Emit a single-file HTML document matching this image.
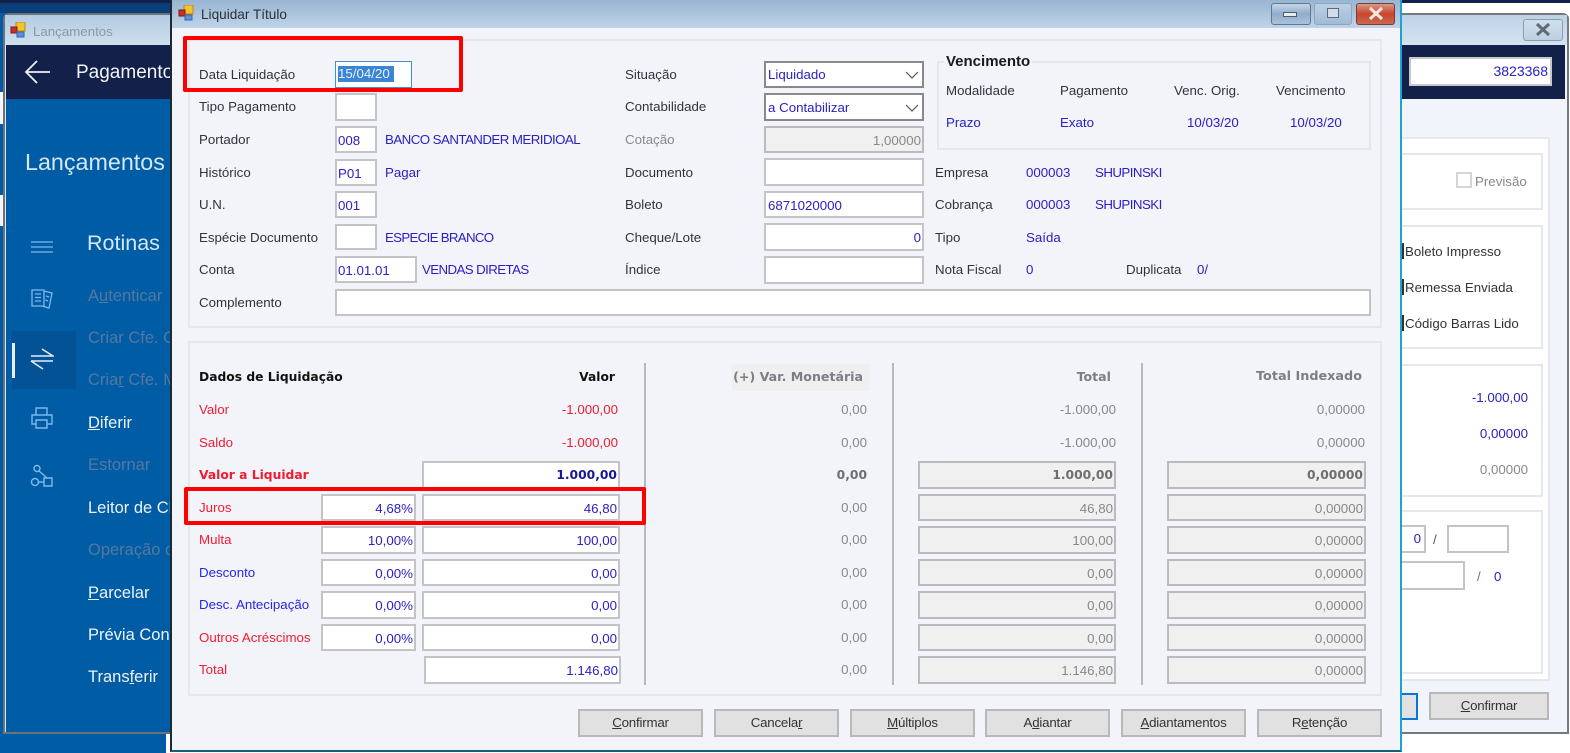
<!DOCTYPE html>
<html lang="pt"><head><meta charset="utf-8"><title>Liquidar Título</title>
<style>
html,body{margin:0;padding:0}
body{width:1570px;height:753px;position:relative;overflow:hidden;background:#fff;font:13.3px/16px "Liberation Sans",sans-serif;color:#30343a}
div,svg{position:absolute;box-sizing:border-box}
#w{left:0;top:0;width:1570px;height:753px;overflow:hidden;filter:blur(.3px)}
.t{white-space:nowrap;height:16px;margin-top:1px}
.r{text-align:right}
.b{color:#2b20c4}.red{color:#f01c30}.lb{color:#2626ea}.g{color:#85888e}
.u{letter-spacing:-.55px}
.n{font-size:16.5px;line-height:20px;height:20px;color:#edf3f9;left:88px;white-space:nowrap;margin-top:1px}
.d{color:#54789f}
.i{background:#fff;border:2px solid #c2c4c8}
.s{border-color:#88898c}
.x{background:#f0f0f0;border:2px solid #b9bbbf}
.gb{border:2px solid #e5e7ec}
.h{font:bold 12.3px/16px "DejaVu Sans",sans-serif;white-space:nowrap;height:16px}
.btn{top:709px;height:28px;background:#e1e1e1;border:2px solid #b8b8b8;text-align:center;line-height:24px;color:#333;letter-spacing:-.2px}
.sep{width:2px;background:#b6b8bc;top:363px;height:322px}
</style></head><body><div id="w">
<!-- background -->
<div style="left:0;top:0;width:1570px;height:3px;background:#12204a"></div>
<div style="left:0;top:0;width:171px;height:753px;background:#005ca4"></div>
<div style="left:0;top:0;width:171px;height:3px;background:#12204a"></div>
<div style="left:0;top:3px;width:171px;height:10px;background:#0a3f7c"></div>
<div style="left:0;top:92px;width:3px;height:32px;background:#f4f6f8"></div>
<div style="left:0;top:195px;width:3px;height:31px;background:#f4f6f8"></div>
<div style="left:166px;top:733px;width:5px;height:20px;background:#fff"></div>
<!-- left back window -->
<div style="left:3px;top:13px;width:175px;height:721px;border:2px solid #6d7278;border-right:0;border-radius:6px 0 0 0;background:#dce7f3"></div>
<div style="left:5px;top:15px;width:170px;height:30px;background:linear-gradient(#b4cbe2,#cfdfee)"></div>
<div style="left:6px;top:45px;width:165px;height:687px;background:#005ca4"></div>
<div style="left:6px;top:45px;width:165px;height:54px;background:#12204a"></div>
<svg style="left:10px;top:22px" width="17" height="17" viewBox="0 0 17 17"><rect x="6" y="0" width="9" height="9" fill="#f2c230" stroke="#b88a10"/><rect x="1" y="5" width="6" height="6" fill="#c8302a" stroke="#7a1a18"/><rect x="7" y="10" width="7" height="5" fill="#5c90dc" stroke="#3a66aa"/></svg>
<div class="t" style="left:33px;top:23px;color:#8c97a3">Lançamentos</div>
<svg style="left:24px;top:59px" width="28" height="26" viewBox="0 0 28 26" fill="none" stroke="#eef2f6" stroke-width="1.8"><path d="M2 13H26M13 2 2 13 13 24"/></svg>
<div class="t" style="left:76px;top:60px;font-size:19px;line-height:24px;height:24px;color:#f2f5f8;width:94px;overflow:hidden">Pagamentos</div>
<div class="t" style="left:25px;top:146px;font-size:23.3px;line-height:30px;height:30px;color:#d6e6f3;width:145px;overflow:hidden">Lançamentos</div>
<div class="t" style="left:87px;top:229px;font-size:21.5px;line-height:26px;height:26px;color:#d6e6f3">Rotinas</div>
<svg style="left:30px;top:240px" width="24" height="14" viewBox="0 0 24 14" stroke="#7db8ea" stroke-width="1.3"><path d="M1 2H23M1 7H23M1 12H23"/></svg>
<svg style="left:30px;top:288px" width="24" height="24" viewBox="0 0 24 24" fill="none" stroke="#7db8ea" stroke-width="1.3"><path d="M2 2H14V18H2ZM14 3 22 5 19 20 12 18M5 6H11M5 9.500H11M5 13H11M16 8 19 9M15.500 12 18 13"/></svg>
<div style="left:12px;top:331px;width:64px;height:58px;background:#035296"></div>
<div style="left:12px;top:343px;width:3px;height:35px;background:#e8eef4"></div>
<svg style="left:30px;top:346px" width="24" height="26" viewBox="0 0 24 26" fill="none" stroke="#e6ecf2" stroke-width="1.5"><path d="M1 10H23L12 3M1 15H23M1 15 13 23"/></svg>
<svg style="left:30px;top:406px" width="24" height="24" viewBox="0 0 24 24" fill="none" stroke="#7db8ea" stroke-width="1.4"><path d="M6 9V2H17V9M6 18H2V9H22V18H17M6 14H17V22H6Z"/></svg>
<svg style="left:30px;top:464px" width="24" height="26" viewBox="0 0 24 26" fill="none" stroke="#7db8ea" stroke-width="1.4"><circle cx="7" cy="4.500" r="3"/><circle cx="5" cy="18" r="3.500"/><path d="M9 7 17 14M8.500 18H14M14 14H22V22H14Z"/></svg>
<div class="n d" style="top:285px">A<u>u</u>tenticar</div>
<div class="n d" style="top:327px;width:83px;overflow:hidden">Criar Cfe. Cheque</div>
<div class="n d" style="top:369px;width:83px;overflow:hidden">Cria<u>r</u> Cfe. Mov</div>
<div class="n" style="top:412px"><u>D</u>iferir</div>
<div class="n d" style="top:454px">Estornar</div>
<div class="n" style="top:497px;width:83px;overflow:hidden">Leitor de Cheque</div>
<div class="n d" style="top:539px;width:83px;overflow:hidden">Operação de</div>
<div class="n" style="top:582px"><u>P</u>arcelar</div>
<div class="n" style="top:624px;width:83px;overflow:hidden">Prévia Contábil</div>
<div class="n" style="top:666px">Trans<u>f</u>erir</div>
<!-- right back window -->
<div style="left:1395px;top:3px;width:175px;height:10px;background:#fff"></div>
<div style="left:1395px;top:13px;width:174px;height:721px;background:#f1f4fa;border:2px solid #75797e;border-left:0;border-radius:0 6px 0 0"></div>
<div style="left:1395px;top:15px;width:172px;height:30px;background:linear-gradient(#bdd2e6,#d6e3f0)"></div>
<div style="left:1523px;top:19px;width:40px;height:22px;background:linear-gradient(#cfdeec,#bdd0e2);border:1px solid #8c9cab;border-radius:3px"></div>
<svg style="left:1535px;top:23px" width="16" height="13" viewBox="0 0 16 13" stroke="#5e6a74" stroke-width="3"><path d="M2 1 14 12M14 1 2 12"/></svg>
<div style="left:1395px;top:45px;width:170px;height:54px;background:#12204a"></div>
<div class="i r b" style="left:1409px;top:57px;width:143px;height:29px;font-size:14px;line-height:25px;padding-right:2px;border-color:#c8c8c8">3823368</div>
<div style="left:1395px;top:137px;width:155px;height:544px;background:#fff;border:2px solid #e5e7ec;border-left:0"></div>
<div class="gb" style="left:1395px;top:153px;width:148px;height:57px;border-left:0"></div>
<div class="x" style="left:1456px;top:172px;width:16px;height:16px;background:#fff;border-color:#d4d5d7"></div>
<div class="t g" style="left:1475px;top:173px">Previsão</div>
<div class="gb" style="left:1395px;top:225px;width:148px;height:124px;border-left:0"></div>
<div style="left:1401px;top:243px;width:3px;height:16px;background:#333"></div>
<div style="left:1401px;top:279px;width:3px;height:16px;background:#333"></div>
<div style="left:1401px;top:315px;width:3px;height:16px;background:#333"></div>
<div class="t" style="left:1405px;top:243px">Boleto Impresso</div>
<div class="t" style="left:1405px;top:279px">Remessa Enviada</div>
<div class="t" style="left:1405px;top:315px">Código Barras Lido</div>
<div class="gb" style="left:1395px;top:364px;width:148px;height:133px;border-left:0"></div>
<div class="t r b" style="left:1400px;top:389px;width:128px">-1.000,00</div>
<div class="t r b" style="left:1400px;top:425px;width:128px">0,00000</div>
<div class="t r g" style="left:1400px;top:461px;width:128px">0,00000</div>
<div class="gb" style="left:1395px;top:510px;width:148px;height:164px;border-left:0;background:#fff"></div>
<div class="i r b" style="left:1395px;top:525px;width:31px;height:28px;padding-right:3px;line-height:24px">0</div>
<div class="t" style="left:1433px;top:531px;color:#555">/</div>
<div class="i" style="left:1447px;top:525px;width:62px;height:28px"></div>
<div class="i" style="left:1395px;top:561px;width:70px;height:29px"></div>
<div class="t" style="left:1477px;top:568px;color:#607090">/</div>
<div class="t b" style="left:1494px;top:568px">0</div>
<div style="left:1395px;top:693px;width:23px;height:27px;border:2px solid #0078d7;border-left:0;background:#e1e1e1"></div>
<div class="btn" style="left:1429px;top:692px;width:120px"><u>C</u>onfirmar</div>
<!-- main dialog -->
<div style="left:170px;top:0;width:1232px;height:752px;background:#f2f4fa;border-left:2px solid #1c2a33;border-right:2px solid #1ba3d4;border-bottom:2px solid #16606f"></div>
<div style="left:172px;top:0;width:1228px;height:28px;background:linear-gradient(#98b5d2,#c0d4e8)"></div>
<svg style="left:178px;top:5px" width="17" height="17" viewBox="0 0 17 17"><rect x="6" y="0" width="9" height="9" fill="#f2c230" stroke="#b88a10"/><rect x="1" y="5" width="6" height="6" fill="#c8302a" stroke="#7a1a18"/><rect x="7" y="10" width="7" height="5" fill="#5c90dc" stroke="#3a66aa"/></svg>
<div class="t" style="left:201px;top:6px;color:#2a3038;font-size:13.6px">Liquidar Título</div>
<div style="left:1271px;top:3px;width:40px;height:22px;background:linear-gradient(#c4d6e8,#8fadcb 50%,#a8c2dc);border:1px solid #62778c;border-radius:3px"></div>
<div style="left:1283px;top:12px;width:14px;height:5px;background:#e6ecf2;border:1px solid #4e5c68"></div>
<div style="left:1314px;top:3px;width:38px;height:22px;background:linear-gradient(#bcd0e4,#a0bbd6);border:1px solid #8ea6bd;border-radius:3px"></div>
<div style="left:1327px;top:8px;width:12px;height:10px;border:1.5px solid #5a6a78;background:#d0dcea"></div>
<div style="left:1356px;top:3px;width:39px;height:22px;background:linear-gradient(#d89a86,#c8452c 50%,#c96a50);border:1px solid #7c3a30;border-radius:3px"></div>
<svg style="left:1368px;top:7px" width="16" height="13" viewBox="0 0 16 13" stroke="#f0e8e0" stroke-width="3"><path d="M2 1 14 12M14 1 2 12"/></svg>
<!-- group 1 -->
<div class="gb" style="left:188px;top:39px;width:1194px;height:289px"></div>
<div class="t" style="left:199px;top:66px">Data Liquidação</div>
<div style="left:335px;top:61px;width:77px;height:27px;background:#fff;border:1px solid #3a92d8"></div>
<div style="left:338px;top:66px;width:56px;height:16px;background:#3b86d4"></div>
<div class="t" style="left:338px;top:65px;color:#e8f0fa">15/04/20</div>
<div class="t" style="left:199px;top:98px">Tipo Pagamento</div>
<div class="i" style="left:335px;top:93px;width:42px;height:28px"></div>
<div class="t" style="left:199px;top:131px">Portador</div>
<div class="i b" style="left:335px;top:126px;width:42px;height:27px;padding-left:1px;line-height:25px">008</div>
<div class="t b u" style="left:385px;top:131px">BANCO SANTANDER MERIDIOAL</div>
<div class="t" style="left:199px;top:164px">Histórico</div>
<div class="i b" style="left:335px;top:159px;width:42px;height:27px;padding-left:1px;line-height:25px">P01</div>
<div class="t b" style="left:385px;top:164px">Pagar</div>
<div class="t" style="left:199px;top:196px">U.N.</div>
<div class="i b" style="left:335px;top:191px;width:42px;height:27px;padding-left:1px;line-height:25px">001</div>
<div class="t" style="left:199px;top:229px">Espécie Documento</div>
<div class="i" style="left:335px;top:224px;width:42px;height:26px"></div>
<div class="t b" style="left:385px;top:229px;letter-spacing:-.7px">ESPECIE BRANCO</div>
<div class="t" style="left:199px;top:261px">Conta</div>
<div class="i b" style="left:335px;top:256px;width:82px;height:27px;padding-left:1px;line-height:25px">01.01.01</div>
<div class="t b" style="left:422px;top:261px;letter-spacing:-.6px">VENDAS DIRETAS</div>
<div class="t" style="left:199px;top:294px">Complemento</div>
<div class="i" style="left:335px;top:289px;width:1036px;height:27px"></div>
<div class="t" style="left:625px;top:66px">Situação</div>
<div class="i b s" style="left:764px;top:61px;width:160px;height:27px;padding-left:2px;line-height:24px">Liquidado</div>
<svg style="left:905px;top:71px" width="14" height="8" viewBox="0 0 14 8" fill="none" stroke="#555" stroke-width="1.2"><path d="M1 1 7 7 13 1"/></svg>
<div class="t" style="left:625px;top:98px">Contabilidade</div>
<div class="i b s" style="left:764px;top:93px;width:160px;height:28px;padding-left:2px;line-height:25px">a Contabilizar</div>
<svg style="left:905px;top:104px" width="14" height="8" viewBox="0 0 14 8" fill="none" stroke="#555" stroke-width="1.2"><path d="M1 1 7 7 13 1"/></svg>
<div class="t g" style="left:625px;top:131px">Cotação</div>
<div class="x r g" style="left:764px;top:126px;width:160px;height:27px;padding-right:1px;line-height:25px">1,00000</div>
<div class="t" style="left:625px;top:164px">Documento</div>
<div class="i" style="left:764px;top:158px;width:160px;height:28px"></div>
<div class="t" style="left:625px;top:196px">Boleto</div>
<div class="i b" style="left:764px;top:191px;width:160px;height:27px;padding-left:2px;line-height:25px">6871020000</div>
<div class="t" style="left:625px;top:229px">Cheque/Lote</div>
<div class="i r b" style="left:764px;top:223px;width:160px;height:28px;padding-right:1px;line-height:26px">0</div>
<div class="t" style="left:625px;top:261px">Índice</div>
<div class="i" style="left:764px;top:256px;width:160px;height:28px"></div>
<!-- vencimento -->
<div class="gb" style="left:937px;top:61px;width:434px;height:89px"></div>
<div class="h" style="left:944px;top:54px;background:#f2f4fa;padding:0 2px;color:#1a1a1a;font-family:'Liberation Sans',sans-serif;font-size:15px">Vencimento</div>
<div class="t" style="left:946px;top:82px">Modalidade</div>
<div class="t" style="left:1060px;top:82px">Pagamento</div>
<div class="t" style="left:1174px;top:82px">Venc. Orig.</div>
<div class="t" style="left:1276px;top:82px">Vencimento</div>
<div class="t b" style="left:946px;top:114px">Prazo</div>
<div class="t b" style="left:1060px;top:114px">Exato</div>
<div class="t b" style="left:1187px;top:114px">10/03/20</div>
<div class="t b" style="left:1290px;top:114px">10/03/20</div>
<div class="t" style="left:935px;top:164px">Empresa</div>
<div class="t b" style="left:1026px;top:164px">000003</div>
<div class="t b u" style="left:1095px;top:164px">SHUPINSKI</div>
<div class="t" style="left:935px;top:196px">Cobrança</div>
<div class="t b" style="left:1026px;top:196px">000003</div>
<div class="t b u" style="left:1095px;top:196px">SHUPINSKI</div>
<div class="t" style="left:935px;top:229px">Tipo</div>
<div class="t b" style="left:1026px;top:229px">Saída</div>
<div class="t" style="left:935px;top:261px">Nota Fiscal</div>
<div class="t b" style="left:1026px;top:261px">0</div>
<div class="t" style="left:1126px;top:261px">Duplicata</div>
<div class="t b" style="left:1197px;top:261px">0/</div>
<!-- group 2 -->
<div class="gb" style="left:188px;top:341px;width:1194px;height:355px"></div>
<div class="sep" style="left:644px"></div><div class="sep" style="left:892px"></div><div class="sep" style="left:1141px"></div>
<div class="h" style="left:199px;top:369px;color:#111">Dados de Liquidação</div>
<div class="h r" style="left:515px;top:369px;width:100px;color:#111">Valor</div>
<div style="left:732px;top:364px;width:137px;height:27px;background:#efefef"></div>
<div class="h r" style="left:700px;top:369px;width:163px;color:#7c7e84;font-size:12.6px">(+) Var. Monetária</div>
<div class="h r" style="left:1010px;top:369px;width:101px;color:#7c7e84;font-size:12.6px">Total</div>
<div class="h r" style="left:1200px;top:369px;width:162px;color:#7c7e84;font-size:12.8px">Total Indexado</div>
<!-- rows -->
<div class="t red" style="left:199px;top:401px">Valor</div>
<div class="t r red" style="left:500px;top:401px;width:118px">-1.000,00</div>
<div class="t r g" style="left:767px;top:401px;width:100px">0,00</div>
<div class="t r g" style="left:1016px;top:401px;width:100px">-1.000,00</div>
<div class="t r g" style="left:1265px;top:401px;width:100px">0,00000</div>
<div class="t red" style="left:199px;top:434px">Saldo</div>
<div class="t r red" style="left:500px;top:434px;width:118px">-1.000,00</div>
<div class="t r g" style="left:767px;top:434px;width:100px">0,00</div>
<div class="t r g" style="left:1016px;top:434px;width:100px">-1.000,00</div>
<div class="t r g" style="left:1265px;top:434px;width:100px">0,00000</div>
<div class="h" style="left:199px;top:467px;color:#f01c30;font-size:12.3px">Valor a Liquidar</div>
<div class="i r h" style="left:422px;top:461px;width:198px;height:28px;padding-right:1px;line-height:25px;color:#16189c">1.000,00</div>
<div class="h r" style="left:767px;top:467px;width:100px;color:#6c6e74">0,00</div>
<div class="x r h" style="left:918px;top:461px;width:198px;height:28px;padding-right:1px;line-height:25px;color:#6c6e74">1.000,00</div>
<div class="x r h" style="left:1167px;top:461px;width:199px;height:28px;padding-right:1px;line-height:25px;color:#6c6e74">0,00000</div>
<div class="t red" style="left:199px;top:499px">Juros</div>
<div class="i r b" style="left:321px;top:494px;width:95px;height:27px;padding-right:1px;line-height:26px">4,68%</div>
<div class="i r b" style="left:422px;top:494px;width:198px;height:27px;padding-right:1px;line-height:26px">46,80</div>
<div class="t r g" style="left:767px;top:499px;width:100px">0,00</div>
<div class="x r g" style="left:918px;top:494px;width:198px;height:27px;padding-right:1px;line-height:26px">46,80</div>
<div class="x r g" style="left:1167px;top:494px;width:199px;height:27px;padding-right:1px;line-height:26px">0,00000</div>
<div class="t red" style="left:199px;top:531px">Multa</div>
<div class="i r b" style="left:321px;top:526px;width:95px;height:28px;padding-right:1px;line-height:26px">10,00%</div>
<div class="i r b" style="left:422px;top:526px;width:198px;height:28px;padding-right:1px;line-height:26px">100,00</div>
<div class="t r g" style="left:767px;top:531px;width:100px">0,00</div>
<div class="x r g" style="left:918px;top:526px;width:198px;height:28px;padding-right:1px;line-height:26px">100,00</div>
<div class="x r g" style="left:1167px;top:526px;width:199px;height:28px;padding-right:1px;line-height:26px">0,00000</div>
<div class="t lb" style="left:199px;top:564px">Desconto</div>
<div class="i r b" style="left:321px;top:559px;width:95px;height:27px;padding-right:1px;line-height:26px">0,00%</div>
<div class="i r b" style="left:422px;top:559px;width:198px;height:27px;padding-right:1px;line-height:26px">0,00</div>
<div class="t r g" style="left:767px;top:564px;width:100px">0,00</div>
<div class="x r g" style="left:918px;top:559px;width:198px;height:27px;padding-right:1px;line-height:26px">0,00</div>
<div class="x r g" style="left:1167px;top:559px;width:199px;height:27px;padding-right:1px;line-height:26px">0,00000</div>
<div class="t lb" style="left:199px;top:596px">Desc. Antecipação</div>
<div class="i r b" style="left:321px;top:591px;width:95px;height:28px;padding-right:1px;line-height:26px">0,00%</div>
<div class="i r b" style="left:422px;top:591px;width:198px;height:28px;padding-right:1px;line-height:26px">0,00</div>
<div class="t r g" style="left:767px;top:596px;width:100px">0,00</div>
<div class="x r g" style="left:918px;top:591px;width:198px;height:28px;padding-right:1px;line-height:26px">0,00</div>
<div class="x r g" style="left:1167px;top:591px;width:199px;height:28px;padding-right:1px;line-height:26px">0,00000</div>
<div class="t red" style="left:199px;top:629px">Outros Acréscimos</div>
<div class="i r b" style="left:321px;top:624px;width:95px;height:27px;padding-right:1px;line-height:26px">0,00%</div>
<div class="i r b" style="left:422px;top:624px;width:198px;height:27px;padding-right:1px;line-height:26px">0,00</div>
<div class="t r g" style="left:767px;top:629px;width:100px">0,00</div>
<div class="x r g" style="left:918px;top:624px;width:198px;height:27px;padding-right:1px;line-height:26px">0,00</div>
<div class="x r g" style="left:1167px;top:624px;width:199px;height:27px;padding-right:1px;line-height:26px">0,00000</div>
<div class="t red" style="left:199px;top:661px">Total</div>
<div class="i r b" style="left:424px;top:656px;width:197px;height:28px;padding-right:1px;line-height:26px">1.146,80</div>
<div class="t r g" style="left:767px;top:661px;width:100px">0,00</div>
<div class="x r g" style="left:918px;top:656px;width:198px;height:28px;padding-right:1px;line-height:26px">1.146,80</div>
<div class="x r g" style="left:1167px;top:656px;width:199px;height:28px;padding-right:1px;line-height:26px">0,00000</div>
<!-- buttons -->
<div class="btn" style="left:578px;width:125px"><u>C</u>onfirmar</div>
<div class="btn" style="left:714px;width:125px">Cancela<u>r</u></div>
<div class="btn" style="left:850px;width:125px"><u>M</u>últiplos</div>
<div class="btn" style="left:985px;width:125px">A<u>d</u>iantar</div>
<div class="btn" style="left:1121px;width:125px"><u>A</u>diantamentos</div>
<div class="btn" style="left:1257px;width:125px">R<u>e</u>tenção</div>
<!-- annotations -->
<div style="left:183px;top:36px;width:280px;height:56px;border:4px solid #f00;border-radius:2px"></div>
<div style="left:184px;top:487px;width:462px;height:38px;border:4px solid #f00;border-radius:2px"></div>
</div></body></html>
